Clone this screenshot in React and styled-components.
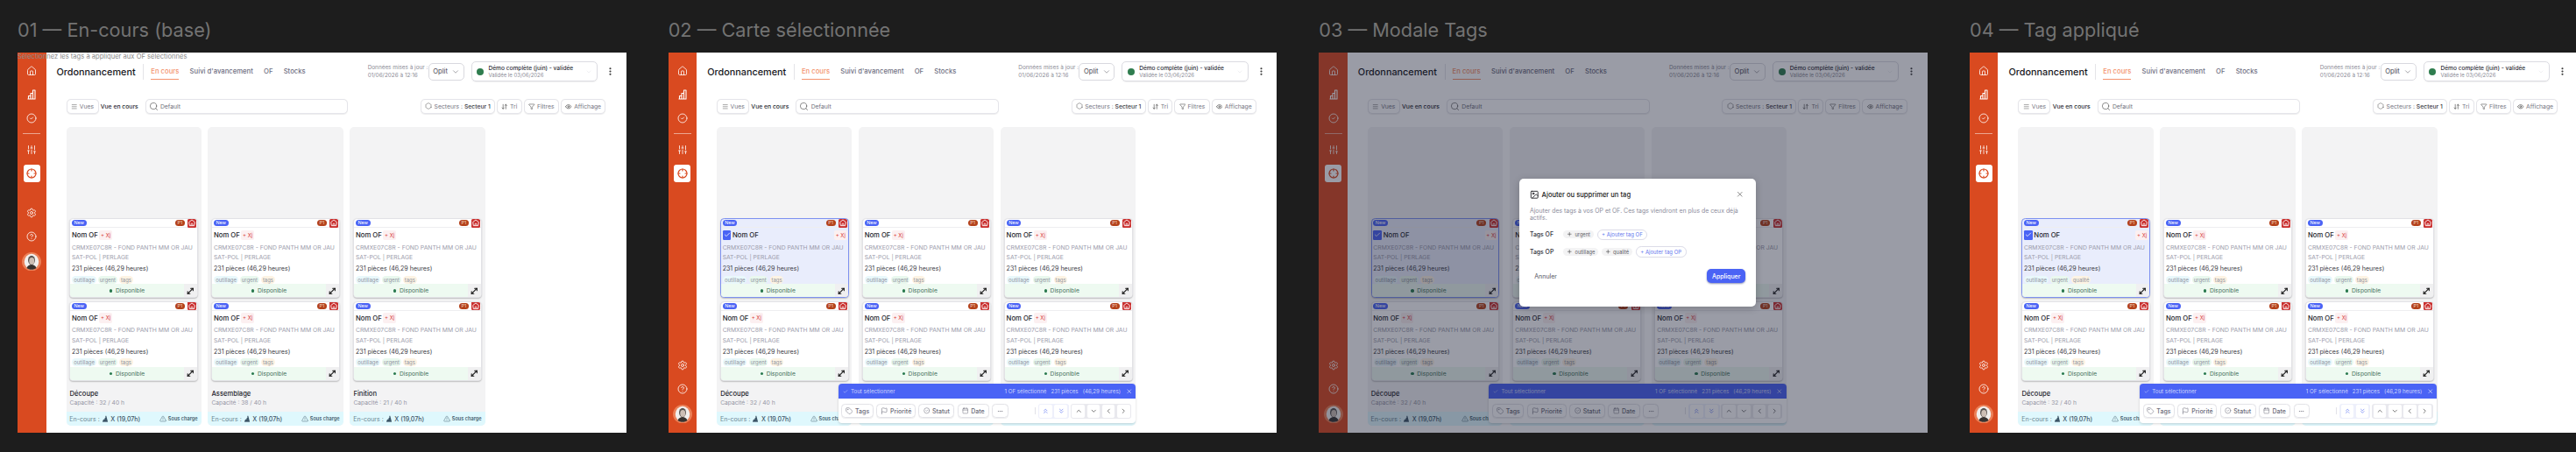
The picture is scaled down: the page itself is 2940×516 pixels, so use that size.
import React from 'react';
import styled, { createGlobalStyle } from 'styled-components';
import {
  House, CircleCheck, SlidersVertical, Crosshair, Settings, CircleHelp, Menu, Search,
  ArrowDownUp, Funnel, Eye, Tag, Flag, Calendar, Ellipsis, ChevronsUp, ChevronsDown,
  ChevronUp, ChevronDown, ChevronLeft, ChevronRight, X, Plus, Image, TriangleAlert,
  Check, MoveDiagonal, EllipsisVertical, Hexagon,
} from 'lucide-react';

const Global = createGlobalStyle`
  html, body { margin: 0; padding: 0; background: #1d1d1d; overflow: hidden; }
  #root { width: 2940px; height: 516px; overflow: hidden; }
  * { box-sizing: border-box; }
`;

const Board = styled.div`
  display: flex; gap: 48px; padding-left: 20px; width: 2990px; height: 516px;
  font-family: Inter, "Noto Sans", sans-serif; color: #1c1c22;
`;
const Panel = styled.section`flex: none; width: 694.67px; display: flex; flex-direction: column;`;
const PanelTitle = styled.h2`
  margin: 0; height: 60px; padding-top: 21.5px; font-size: 21.7px; line-height: 24px; font-weight: 400;
  color: #737373; white-space: nowrap;
`;
const Frame = styled.div`
  position: relative; display: flex; width: 694.67px; height: 434px; background: #fff; overflow: hidden;
`;
const LeakedHint = styled.div`
  position: absolute; left: 0; top: 0; font-size: 7.6px; line-height: 9px; color: #8a8a8a; white-space: nowrap; z-index: 2;
`;

/* sidebar */
const Sidebar = styled.nav`
  flex: none; width: 32.5px; height: 100%; background: #d94a20; display: flex; flex-direction: column; align-items: center;
  padding: 7.5px 0 ${p => p.$bottom}px; color: #fff;
`;
const NavItem = styled.div`width: 100%; height: 27px; display: flex; align-items: center; justify-content: center;`;
const NavDivider = styled.div`width: 20px; height: 1px; background: rgba(255,255,255,.5); margin: 3.5px 0 4.5px;`;
const NavActive = styled.div`
  width: 19px; height: 19.5px; margin-top: 3.5px; background: #fff; border-radius: 3px; color: #d94a20;
  display: flex; align-items: center; justify-content: center;
`;
const NavFooter = styled.div`margin-top: auto; width: 100%; display: flex; flex-direction: column; align-items: center;`;
const AvatarWrap = styled.div`width: 22px; height: 21.5px; margin-top: 4px;`;

/* main */
const Main = styled.main`flex: 1; min-width: 0; height: 100%; display: flex; flex-direction: column;`;
const Header = styled.header`
  flex: none; height: 43.2px; display: flex; align-items: center; padding: 0 12.6px 0 12px;
`;
const AppTitle = styled.h1`margin: 0; width: 90.4px; font-size: 10.85px; font-weight: 500; color: #15151a; white-space: nowrap;`;
const VDivider = styled.div`width: 1px; height: 18px; background: #e4e4e8; margin: 0 8px 0 8.4px;`;
const Tabs = styled.div`display: flex; gap: 12.2px;`;
const TabItem = styled.div`
  height: 18.4px; display: flex; align-items: center; font-size: 7.7px; font-weight: 500; white-space: nowrap;
  color: ${p => (p.$active ? '#f3936e' : '#6f6f82')};
  border-top: 1.3px solid transparent; border-bottom: 1.3px solid ${p => (p.$active ? '#f3936e' : 'transparent')};
`;
const HeaderRight = styled.div`margin-left: auto; display: flex; align-items: center; gap: 8px;`;
const UpdateInfo = styled.div`width: 61px; font-size: 6.4px; line-height: 8.6px; color: #8b8b96; white-space: nowrap;`;
const SelectBox = styled.div`
  height: 20px; width: 41px; display: flex; align-items: center; justify-content: space-between; padding: 0 3.5px 0 4.6px;
  border: .7px solid #d9d9df; border-radius: 5px; font-size: 7.6px; color: #4a4a55;
`;
const ScenarioBox = styled.div`
  width: 144.4px; height: 23.6px; display: flex; align-items: center; padding: 0 5px 0 5.8px; gap: 5px;
  border: .7px solid #dcdce2; border-radius: 5px; box-shadow: 0 .5px 1px rgba(0,0,0,.06);
`;
const GreenDot = styled.span`flex: none; width: 8px; height: 8px; border-radius: 50%; background: #2f7d4f;`;
const ScenarioText = styled.div`flex: 1; min-width: 0; white-space: nowrap;`;
const ScenarioName = styled.div`font-size: 6.6px; line-height: 8.4px; font-weight: 500; color: #30303a;`;
const ScenarioDate = styled.div`font-size: 5.97px; line-height: 7.6px; color: #8b8b96;`;
const Kebab = styled.div`width: 11px; display: flex; justify-content: center; margin-left: 1px; color: #333;`;

const Toolbar = styled.div`
  flex: none; height: 16.4px; margin-top: 10.1px; padding: 0 23.3px 0 23px; display: flex; align-items: center;
`;
const ToolButton = styled.div`
  width: ${p => p.$w}px; height: 16.4px; display: flex; align-items: center; justify-content: center; gap: 2.4px;
  background: #fff; border: .7px solid #e5e5ea; border-radius: 5px; box-shadow: 0 .5px 1px rgba(0,0,0,.07);
  font-size: 6.8px; color: #777784; white-space: nowrap;
`;
const ToolStrong = styled.b`font-weight: 500; color: #3c3c46;`;
const ViewLabel = styled.div`width: 42.3px; font-size: 6.8px; font-weight: 500; color: #2a2a32; margin: 0 8.6px 0 2.2px; white-space: nowrap;`;
const SearchBox = styled(ToolButton)`justify-content: flex-start; padding: 0 3px; color: #6f6f7b;`;
const ToolRight = styled.div`margin-left: auto; display: flex; gap: 1.9px;`;

const Columns = styled.div`
  flex: 1; min-height: 0; margin-top: 15px; padding: 0 0 8.3px 23px; display: flex; gap: 7.7px;
`;
const Column = styled.div`
  flex: none; width: 154.3px; height: 100%; background: #f3f3f4; border-radius: 5px; overflow: hidden;
  display: flex; flex-direction: column; justify-content: flex-end;
`;
const CardStack = styled.div`display: flex; flex-direction: column; gap: 3.3px; padding: 0 3.7px;`;
const Card = styled.article`
  height: 91.4px; border-radius: 4.5px; overflow: hidden; display: flex; flex-direction: column;
  background: ${p => (p.$selected ? '#e9edfc' : '#fff')};
  border: ${p => (p.$selected ? '.8px solid #7d91f0' : '.6px solid #e2e2e6')};
  box-shadow: 0 1px 1.5px rgba(0,0,0,.22);
`;
const CardTop = styled.div`
  flex: none; height: 10.4px; display: flex; align-items: center; padding: 0 .8px 0 1.8px; border-bottom: .6px solid #eeeef0;
`;
const NewPill = styled.span`
  width: 16.6px; height: 7px; border-radius: 4px; background: #4a63f5; color: #fff; font-size: 5.4px; line-height: 7px; text-align: center;
`;
const PriorityPill = styled.span`
  margin-left: auto; width: 11px; height: 7.4px; border-radius: 4px; background: #b4421b; color: #f2d6c8; font-size: 5.4px; line-height: 7.4px; text-align: center;
`;
const AlertSquare = styled.span`
  margin-left: 3.4px; width: 10px; height: 10px; border-radius: 1.6px; background: #c9302f; display: flex; align-items: center; justify-content: center;
`;
const CardName = styled.div`flex: none; height: 16.1px; display: flex; align-items: center; padding: 0 1.2px 0 1.8px; gap: 1.6px;`;
const SelectTick = styled.span`
  flex: none; width: 9.8px; height: 10.2px; border-radius: 1.2px; background: #4a63f5; color: #fff; display: flex; align-items: center; justify-content: center;
`;
const NameText = styled.span`font-size: 7.7px; font-weight: 500; color: #24242c; white-space: nowrap;`;
const DelayPill = styled.span`
  height: 11.4px; width: 14.6px; border-radius: 2px; background: #fcf0f1; color: #d83a3a; font-size: 6px; line-height: 11.4px; text-align: center; white-space: nowrap;
  margin-left: ${p => (p.$push ? 'auto' : '0')};
`;
const CodeLine = styled.div`flex: none; padding-left: 1.8px; height: 11.4px; font-size: 6.8px; line-height: 11.4px; color: #9b9bab; white-space: nowrap;`;
const Pieces = styled.div`flex: none; margin-top: 2.2px; padding-left: 1.8px; height: 11.4px; font-size: 7.1px; line-height: 11.4px; color: #3a3a44; white-space: nowrap;`;
const TagRow = styled.div`flex: none; margin-top: 1.8px; padding-left: 2.3px; height: 9px; display: flex; gap: 2.4px;`;
const TagPill = styled.span`
  height: 9px; padding: 0 1.8px; border-radius: 4.5px; font-size: 5.9px; line-height: 9px; color: #8f93a0;
  background: ${p => p.$bg};
`;
const CardFooter = styled.div`flex: none; margin-top: auto; height: 15px; display: flex;`;
const Availability = styled.div`
  flex: 1; display: flex; align-items: center; justify-content: center; gap: 3.5px; background: #eefaf1; color: #44705a; font-size: 6.7px;
`;
const AvailDot = styled.span`width: 3.6px; height: 3.6px; border-radius: 50%; background: #2a7a4f;`;
const ExpandBox = styled.div`flex: none; width: 15.2px; background: #f0f0f1; color: #111; display: flex; align-items: center; justify-content: center;`;

const ColumnInfo = styled.div`padding: 8.5px 0 3.9px 4px;`;
const ColumnName = styled.div`font-size: 7.6px; line-height: 11.4px; font-weight: 500; color: #26262e;`;
const Capacity = styled.div`font-size: 6.7px; line-height: 11.4px; color: #9696a4;`;
const Band = styled.div`
  flex: none; height: 15.4px; background: #dff8fd; display: flex; align-items: center; padding: 0 4.2px 0 3.8px;
  font-size: 7.05px; color: #6c8794; white-space: nowrap;
`;
const BandValue = styled.span`display: flex; align-items: center; gap: 2.6px; color: #3d5668; font-weight: 500; margin-left: 2px;`;
const BandState = styled.span`margin-left: auto; display: flex; align-items: center; gap: 1.6px; font-size: 5.6px; font-weight: 600; color: #3f5c6c;`;

/* selection bar */
const SelectionBar = styled.div`
  position: absolute; right: 161.3px; bottom: 10.7px; width: 339.3px; height: 45px; border-radius: 4px; overflow: hidden;
  background: #fff; box-shadow: 0 1px 3px rgba(0,0,0,.16); z-index: 1;
`;
const BarHead = styled.div`
  height: 17px; background: #4a63f5; color: rgba(255,255,255,.72); font-size: 6.2px; display: flex; align-items: center; padding: 0 4px 0 4.8px; white-space: nowrap;
`;
const BarSelectAll = styled.span`display: flex; align-items: center; gap: 3.4px;`;
const BarStats = styled.span`margin-left: auto; display: flex; gap: 5px; margin-right: 5.6px;`;
const BarClose = styled.span`display: flex; color: #fff;`;
const BarBody = styled.div`height: 28px; padding: 5.7px 4.6px 0 3.6px; display: flex; align-items: flex-start;`;
const BarActions = styled.div`display: flex; gap: 3.3px;`;
const BarButton = styled.div`
  width: ${p => p.$w}px; height: 16px; display: flex; align-items: center; justify-content: center; gap: 2.6px;
  border: .7px solid #e3e3e8; border-radius: 4.5px; box-shadow: 0 .5px 1px rgba(0,0,0,.07); font-size: 7px; font-weight: 500; color: #6b6b78;
`;
const BarSep = styled.div`width: 1px; height: 8px; margin: 4px 3px 0 auto; background: #e2e2e8;`;
const IconGroup = styled.div`
  height: 17px; margin-top: -.5px; display: flex; gap: 2.6px; padding: 1px 1.8px; border-radius: 3px; background: ${p => p.$bg};
  margin-left: ${p => p.$ml || 0}px;
`;
const IconButton = styled.div`
  width: 14.6px; height: 15px; border-radius: 2px; background: #fff; display: flex; align-items: center; justify-content: center; color: ${p => p.$color};
`;

/* modal */
const Backdrop = styled.div`
  position: absolute; inset: 0; z-index: 3; background: rgba(26,30,52,.44); display: flex; align-items: center; justify-content: center; padding-left: 32.5px;
`;
const Modal = styled.div`
  width: 270px; height: 145.3px; padding: 12.3px 11.7px 0 12px; background: #fff; border-radius: 5px; box-shadow: 0 2px 8px rgba(0,0,0,.2);
  display: flex; flex-direction: column;
`;
const ModalHead = styled.div`display: flex; align-items: center; gap: 3.2px; height: 12px; color: #1a1a20;`;
const ModalTitle = styled.h3`margin: 0; font-size: 7.6px; font-weight: 500; white-space: nowrap;`;
const ModalClose = styled.span`margin-left: auto; margin-right: 2px; margin-top: -2px; display: flex; color: #444;`;
const ModalText = styled.p`margin: 8.4px 0 0; font-size: 6.9px; line-height: 8.4px; color: #8d8d9c;`;
const TagLine = styled.div`display: flex; align-items: center; height: 13px; margin-top: ${p => p.$mt}px;`;
const TagLineLabel = styled.span`width: 38.3px; font-size: 6.9px; font-weight: 500; color: #33333c;`;
const RemovablePills = styled.div`display: flex; align-items: center; gap: 3.8px;`;
const RemovableTag = styled.span`
  height: 9px; display: flex; align-items: center; gap: 2.6px; padding: 0 3.8px 0 4.2px; border-radius: 4.5px; background: #f3f3f4;
  font-size: 5.7px; color: #5c5c66; white-space: nowrap;
`;
const AddTag = styled.span`
  height: 12.4px; padding: 0 4.6px; display: flex; align-items: center; border: .7px solid #dcdce8; border-radius: 6.2px;
  font-size: 6px; color: #6476ee; white-space: nowrap;
`;
const ModalActions = styled.div`display: flex; align-items: center; justify-content: space-between; margin-top: 13.5px; padding: 0 0 0 5.4px;`;
const CancelLabel = styled.span`font-size: 7px; color: #53535e;`;
const ApplyButton = styled.span`
  width: 44px; height: 15.4px; border-radius: 5px; background: #4a63f5; color: #fff; font-size: 7px; font-weight: 500;
  display: flex; align-items: center; justify-content: center; box-shadow: 0 1px 2px rgba(30,40,110,.5);
`;

const ChartIcon = () => (
  <svg width="12" height="12" viewBox="0 0 24 24" fill="none" stroke="currentColor" strokeWidth="2.2" strokeLinejoin="round">
    <path d="M3 22h18M5 22v-7h5v7M10 22V9h5v13M15 22V2h5v20" />
  </svg>
);
const AlertGlyph = () => (
  <svg width="8" height="8.6" viewBox="0 0 24 24" fill="none" stroke="#fff" strokeWidth="2.6" strokeLinejoin="round">
    <path d="M12 2 22 10l-2 12H4L2 10z" /><path d="M9 22c0-5 1-8 3-8s3 3 3 8" />
  </svg>
);
const LoadGlyph = () => (
  <svg width="8" height="8" viewBox="0 0 24 24" fill="currentColor">
    <path d="M13 2h3l5 20H3l3-8h4l1-5h2z" /><path d="M3 22h18" stroke="currentColor" strokeWidth="2" />
  </svg>
);
const Avatar = () => (
  <svg width="22" height="21.5" viewBox="0 0 44 43">
    <ellipse cx="22" cy="21.5" rx="22" ry="21.5" fill="#ec8057" />
    <ellipse cx="22" cy="21.5" rx="16.5" ry="18" fill="#f2f0ee" />
    <ellipse cx="22" cy="18" rx="8" ry="10.5" fill="#5a5552" />
    <ellipse cx="22.5" cy="20" rx="6" ry="8" fill="#cdbfb5" />
    <path d="M11 36c2-6 7-8 11-8s9 2 11 8c-3 2.500-7 3.500-11 3.500S14 38.500 11 36z" fill="#37322f" />
  </svg>
);

const ToolIcon = { size: 8.5, strokeWidth: 1.6 };

const columns = [
  { name: 'Découpe', cap: 'Capacité : 32 / 40 h' },
  { name: 'Assemblage', cap: 'Capacité : 38 / 40 h' },
  { name: 'Finition', cap: 'Capacité : 21 / 40 h' },
];

const OfCard = ({ selected, applied }) => (
  <Card $selected={selected}>
    <CardTop>
      <NewPill>New</NewPill>
      <PriorityPill>P1</PriorityPill>
      <AlertSquare><AlertGlyph /></AlertSquare>
    </CardTop>
    <CardName>
      {selected && <SelectTick><Check size={8} strokeWidth={2.4} /></SelectTick>}
      <NameText>Nom OF</NameText>
      <DelayPill $push={selected}>+ Xj</DelayPill>
    </CardName>
    <CodeLine>CRMXE07C8R - FOND PANTH MM OR JAU</CodeLine>
    <CodeLine>SAT-POL | PERLAGE</CodeLine>
    <Pieces>231 pièces (46,29 heures)</Pieces>
    <TagRow>
      <TagPill $bg="#e9f8fb">outillage</TagPill>
      <TagPill $bg="#e9f8ee">urgent</TagPill>
      <TagPill $bg="#fdf3e3">{applied ? 'qualité' : 'tags'}</TagPill>
    </TagRow>
    <CardFooter>
      <Availability><AvailDot />Disponible</Availability>
      <ExpandBox><MoveDiagonal size={10.5} strokeWidth={2.4} /></ExpandBox>
    </CardFooter>
  </Card>
);

const Selection = () => (
  <SelectionBar>
    <BarHead>
      <BarSelectAll><Check size={6} strokeWidth={2} />Tout sélectionner</BarSelectAll>
      <BarStats><span>1 OF sélectionné</span><span>231 pièces</span><span>(46,29 heures)</span></BarStats>
      <BarClose><X size={7.5} strokeWidth={1.8} /></BarClose>
    </BarHead>
    <BarBody>
      <BarActions>
        <BarButton $w={36.5}><Tag {...ToolIcon} />Tags</BarButton>
        <BarButton $w={45}><Flag {...ToolIcon} />Priorité</BarButton>
        <BarButton $w={41}><CircleCheck size={7.5} strokeWidth={1.6} />Statut</BarButton>
        <BarButton $w={36.4}><Calendar size={7.5} strokeWidth={1.6} />Date</BarButton>
        <BarButton $w={18.4}><Ellipsis size={7} strokeWidth={1.6} /></BarButton>
      </BarActions>
      <BarSep />
      <IconGroup $bg="#eef0fb">
        <IconButton $color="#5c73f2"><ChevronsUp size={8.5} strokeWidth={1.8} /></IconButton>
        <IconButton $color="#5c73f2"><ChevronsDown size={8.5} strokeWidth={1.8} /></IconButton>
      </IconGroup>
      <IconGroup $bg="#e9e9ee" $ml={1.8}>
        <IconButton $color="#333"><ChevronUp size={8.5} strokeWidth={1.8} /></IconButton>
        <IconButton $color="#333"><ChevronDown size={8.5} strokeWidth={1.8} /></IconButton>
        <IconButton $color="#333"><ChevronLeft size={8.5} strokeWidth={1.8} /></IconButton>
        <IconButton $color="#333"><ChevronRight size={8.5} strokeWidth={1.8} /></IconButton>
      </IconGroup>
    </BarBody>
  </SelectionBar>
);

const TagsModal = () => (
  <Backdrop>
    <Modal>
      <ModalHead>
        <Image size={10.5} strokeWidth={2} />
        <ModalTitle>Ajouter ou supprimer un tag</ModalTitle>
        <ModalClose><X size={9.5} strokeWidth={1.5} /></ModalClose>
      </ModalHead>
      <ModalText>Ajouter des tags à vos OP et OF. Ces tags viendront en plus de ceux déjà actifs.</ModalText>
      <TagLine $mt={7.4}>
        <TagLineLabel>Tags OF</TagLineLabel>
        <RemovablePills>
          <RemovableTag><Plus size={6.5} strokeWidth={1.8} color="#222" />urgent</RemovableTag>
          <AddTag>+ Ajouter tag OF</AddTag>
        </RemovablePills>
      </TagLine>
      <TagLine $mt={6.6}>
        <TagLineLabel>Tags OP</TagLineLabel>
        <RemovablePills>
          <RemovableTag><Plus size={6.5} strokeWidth={1.8} color="#222" />outillage</RemovableTag>
          <RemovableTag><Plus size={6.5} strokeWidth={1.8} color="#222" />qualité</RemovableTag>
          <AddTag>+ Ajouter tag OP</AddTag>
        </RemovablePills>
      </TagLine>
      <ModalActions>
        <CancelLabel>Annuler</CancelLabel>
        <ApplyButton>Appliquer</ApplyButton>
      </ModalActions>
    </Modal>
  </Backdrop>
);

const Screen = ({ title, selected, applied, modal, first }) => (
  <Panel>
    <PanelTitle>{title}</PanelTitle>
    <Frame>
      {first && <LeakedHint>Sélectionnez les tags à appliquer aux OF sélectionnés</LeakedHint>}
      <Sidebar $bottom={first ? 185 : 11}>
        <NavItem><House size={12} strokeWidth={1.6} /></NavItem>
        <NavItem><ChartIcon /></NavItem>
        <NavItem><CircleCheck size={12} strokeWidth={1.6} /></NavItem>
        <NavDivider />
        <NavItem><SlidersVertical size={12} strokeWidth={1.6} /></NavItem>
        <NavActive><Crosshair size={12} strokeWidth={2.4} /></NavActive>
        <NavFooter>
          <NavItem><Settings size={12} strokeWidth={1.6} /></NavItem>
          <NavItem><CircleHelp size={12} strokeWidth={1.6} /></NavItem>
          <AvatarWrap><Avatar /></AvatarWrap>
        </NavFooter>
      </Sidebar>
      <Main>
        <Header>
          <AppTitle>Ordonnancement</AppTitle>
          <VDivider />
          <Tabs>
            <TabItem $active>En cours</TabItem>
            <TabItem>Suivi d'avancement</TabItem>
            <TabItem>OF</TabItem>
            <TabItem>Stocks</TabItem>
          </Tabs>
          <HeaderRight>
            <UpdateInfo>Données mises à jour :<br />01/06/2026 à 12:16</UpdateInfo>
            <SelectBox>Oplit<ChevronDown size={10} strokeWidth={1.2} /></SelectBox>
            <ScenarioBox>
              <GreenDot />
              <ScenarioText>
                <ScenarioName>Démo complète (juin) - validée</ScenarioName>
                <ScenarioDate>Validée le 03/06/2026</ScenarioDate>
              </ScenarioText>
              <ChevronDown size={8} strokeWidth={1} color="#d5d5da" />
            </ScenarioBox>
            <Kebab><EllipsisVertical size={11} strokeWidth={2.6} /></Kebab>
          </HeaderRight>
        </Header>
        <Toolbar>
          <ToolButton $w={37}><Menu size={7.5} strokeWidth={1.6} color="#555" />Vues</ToolButton>
          <ViewLabel>Vue en cours</ViewLabel>
          <SearchBox $w={231.8}><Search size={11} strokeWidth={1.3} color="#444" />Default</SearchBox>
          <ToolRight>
            <ToolButton $w={85}><Hexagon size={8} strokeWidth={1.4} color="#444" /><span>Secteurs : <ToolStrong>Secteur 1</ToolStrong></span></ToolButton>
            <ToolButton $w={28.8}><ArrowDownUp size={7.5} strokeWidth={1.8} color="#333" />Tri</ToolButton>
            <ToolButton $w={40.5}><Funnel size={7.5} strokeWidth={1.6} color="#333" />Filtres</ToolButton>
            <ToolButton $w={51.4}><Eye size={7.5} strokeWidth={1.8} color="#333" />Affichage</ToolButton>
          </ToolRight>
        </Toolbar>
        <Columns>
          {columns.map((c, i) => (
            <Column key={c.name}>
              <CardStack>
                <OfCard selected={selected && i === 0} applied={applied && i === 0} />
                <OfCard />
              </CardStack>
              <ColumnInfo>
                <ColumnName>{c.name}</ColumnName>
                <Capacity>{c.cap}</Capacity>
              </ColumnInfo>
              <Band>
                En-cours :<BandValue><LoadGlyph />X (19,07h)</BandValue>
                <BandState><TriangleAlert size={8} strokeWidth={1.4} />Sous charge</BandState>
              </Band>
            </Column>
          ))}
        </Columns>
      </Main>
      {selected && <Selection />}
      {modal && <TagsModal />}
    </Frame>
  </Panel>
);

export default function App() {
  return (
    <>
      <Global />
      <Board>
        <Screen first title="01 — En-cours (base)" />
        <Screen selected title="02 — Carte sélectionnée" />
        <Screen selected modal title="03 — Modale Tags" />
        <Screen selected applied title="04 — Tag appliqué" />
      </Board>
    </>
  );
}
